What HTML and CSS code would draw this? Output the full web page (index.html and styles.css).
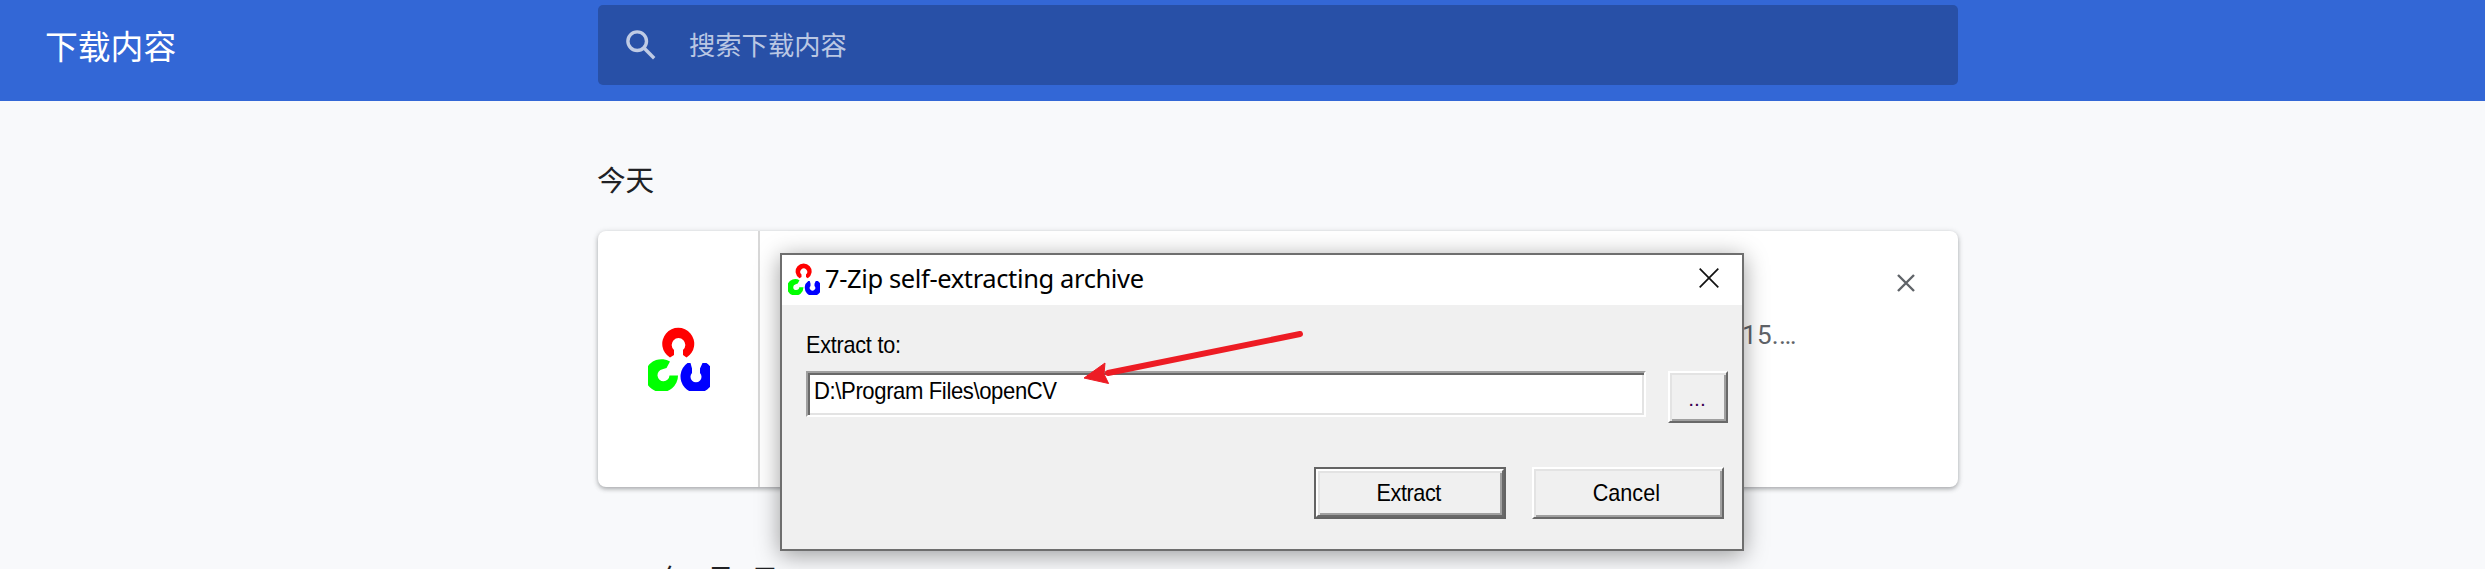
FILE: index.html
```html
<!DOCTYPE html>
<html lang="zh-CN">
<head>
<meta charset="utf-8">
<title>下载内容</title>
<link rel="stylesheet" href="styles.css">
</head>
<body>
<svg class="defs" width="0" height="0">
  <symbol id="opencv" viewBox="0 0 62 64">
    <path fill="#f00" d="M22 30.5A16 16 0 1 1 38.5 30.5L35 28V23A6.8 6.8 0 1 0 26 23V28Z"/>
    <path fill="#0f0" d="M22 34.5A16.5 16.5 0 1 0 30 48.6H21.5A6 6 0 1 1 14.5 42.3L18.5 41Z"/>
    <path fill="#00f" d="M39.5 36A16.5 16.5 0 1 0 58.5 36H54.5L52 41.5V46A5.5 5.5 0 1 1 44 46V41.5L42.5 36Z"/>
  </symbol>
</svg>
<header class="toolbar">
  <h1 class="toolbar-title">下载内容</h1>
  <div class="search">
    <svg class="search-icon" viewBox="0 0 30 30"><circle cx="11.2" cy="11.2" r="9.3"/><path d="M18 18l10.2 10.2"/></svg>
    <span class="search-text">搜索下载内容</span>
  </div>
</header>
<main class="downloads">
  <h2 class="date">今天</h2>
  <section class="card">
    <div class="file-icon"><svg class="logo-large"><use href="#opencv"/></svg></div>
    <div class="card-body">
      <span class="file-url">15.…</span>
      <svg class="remove" viewBox="0 0 18 18"><path d="M1 1l16 16M17 1L1 17"/></svg>
    </div>
  </section>
  <h2 class="date date-next">2021年9月8日</h2>
</main>
<div class="dialog">
  <div class="dialog-bar">
    <svg class="logo-small"><use href="#opencv"/></svg>
    <span class="dialog-title">7-Zip self-extracting archive</span>
    <svg class="dialog-close" viewBox="0 0 20 20"><path d="M.7 .7l18.6 18.6M19.3 .7L.7 19.3"/></svg>
  </div>
  <div class="dialog-body">
    <div class="label"><span class="t-label">Extract to:</span></div>
    <div class="path-row">
      <div class="field"><span class="t-path">D:\Program Files\openCV</span></div>
      <div class="button browse"><span>...</span></div>
    </div>
    <div class="actions">
      <div class="default-frame"><div class="button primary"><span class="t-extract">Extract</span></div></div>
      <div class="button cancel"><span class="t-cancel">Cancel</span></div>
    </div>
  </div>
</div>
<svg class="arrow" viewBox="0 0 230 60"><path class="shaft" d="M220 14L28 53"/><path class="head" d="M4 58L25 43L24 54L28.6 63.5Z"/></svg>
</body>
</html>
```
FILE: styles.css
```css
* { box-sizing: border-box; }
html { overflow: hidden; }
body {
  margin: 0;
  width: 2485px;
  height: 569px;
  overflow: hidden;
  position: relative;
  background: #f8f9fb;
  font-family: Roboto, "Noto Sans CJK SC", sans-serif;
}
svg { display: block; flex: none; overflow: visible; }
.defs { position: absolute; }
h1, h2 { margin: 0; font-weight: 400; }

.toolbar {
  display: flex;
  align-items: flex-start;
  height: 101px;
  padding-top: 5px;
  background: #3367d6;
}
.toolbar-title {
  width: 598px;
  padding: 19px 0 0 45px;
  color: #fff;
  font-size: 32.8px;
  line-height: 48px;
}
.search {
  display: flex;
  align-items: center;
  gap: 33px;
  width: 1360px;
  height: 80px;
  padding-left: 28px;
  border-radius: 5px;
  background: #2850a7;
}
.search-icon {
  width: 30px;
  height: 30px;
  fill: none;
  stroke: #bfcbe5;
  stroke-width: 3.4;
}
.search-text { color: #bac7e3; padding-top: 2px; font-size: 26.3px; line-height: 40px; }

.downloads { width: 1360px; height: 468px; margin-left: 598px; padding-top: 60px; overflow: visible; }
.date { height: 40px; margin-left: -1px; color: #202124; font-size: 28.6px; line-height: 40px; white-space: nowrap; }
.card {
  display: flex;
  height: 256px;
  margin-top: 30px;
  border-radius: 8px;
  background: #fff;
  box-shadow: 0 2px 4px rgba(60, 64, 67, .35), 0 1px 6px rgba(60, 64, 67, .15);
}
.file-icon {
  display: flex;
  align-items: center;
  width: 162px;
  padding-left: 50px;
  border-right: 2px solid #d8d8d8;
}
.logo-large { width: 62px; height: 64px; overflow: hidden; }
.card-body { display: flex; flex: 1; justify-content: space-between; padding: 43px 43px 0 982px; }
.file-url { padding-top: 45px; color: #5f6368; font-size: 26px; line-height: 32px; letter-spacing: .3px; }
.remove { width: 18px; height: 18px; stroke: #5f6368; stroke-width: 2.4; }
.date-next { margin-top: 73px; }

.dialog {
  position: absolute;
  left: 780px;
  top: 253px;
  width: 964px;
  height: 298px;
  border: 2px solid #6e6e6e;
  background: #f0f0f0;
  color: #000;
  font-family: "Liberation Sans", sans-serif;
  font-size: 24px;
  box-shadow: 0 4px 22px rgba(0, 0, 0, .38);
}
.dialog-bar { display: flex; height: 50px; padding: 8px 23px 0 6px; background: #fff; }
.logo-small { width: 32px; height: 32px; overflow: hidden; }
.dialog-title {
  flex: 1;
  padding-left: 5px;
  font-family: "Noto Sans", sans-serif;
  font-size: 25.5px;
  line-height: 31px;
  letter-spacing: -.38px;
}
.dialog-close { width: 20px; height: 20px; margin-top: 5px; stroke: #111; stroke-width: 1.7; }
.dialog-body { padding: 23px 14px 0 24px; }
.label { height: 43px; line-height: 34px; }
.path-row { display: flex; justify-content: space-between; height: 52px; }
.field {
  width: 840px;
  height: 46px;
  border: 2px solid;
  border-color: #a0a0a0 #fff #fff #a0a0a0;
  background: #fff;
  box-shadow: inset 2px 2px #696969, inset -2px -2px #e3e3e3;
  padding-left: 6px;
  line-height: 36px;
}
.button {
  display: flex;
  align-items: center;
  justify-content: center;
  border: 2px solid;
  border-color: #fff #696969 #696969 #fff;
  box-shadow: inset 2px 2px #e3e3e3, inset -2px -2px #a0a0a0;
}
.browse { width: 60px; height: 52px; color: #3a0050; font-size: 21px; padding: 4px 2px 0 0; }
.actions { display: flex; justify-content: flex-end; gap: 26px; margin-top: 44px; padding-right: 4px; }
.default-frame { width: 192px; height: 52px; border: 2px solid #646464; }
.primary { height: 48px; padding-right: 3px; }
.cancel { width: 192px; height: 52px; padding-right: 3px; }
.t-label, .t-path { display: inline-block; white-space: nowrap; transform-origin: 0 50%; }
.t-label { letter-spacing: -.25px; transform: scaleX(.9); }
.t-path { letter-spacing: -.42px; transform: scaleX(.92); }
.t-extract { letter-spacing: -.45px; transform: scaleX(.9); }
.t-cancel { transform: scaleX(.9); }

.arrow { position: absolute; left: 1080px; top: 320px; width: 230px; height: 60px; }
.shaft { fill: none; stroke: #ed1c24; stroke-width: 6; stroke-linecap: round; }
.head { fill: #ed1c24; stroke: #ed1c24; stroke-width: 1; stroke-linejoin: round; }
```
